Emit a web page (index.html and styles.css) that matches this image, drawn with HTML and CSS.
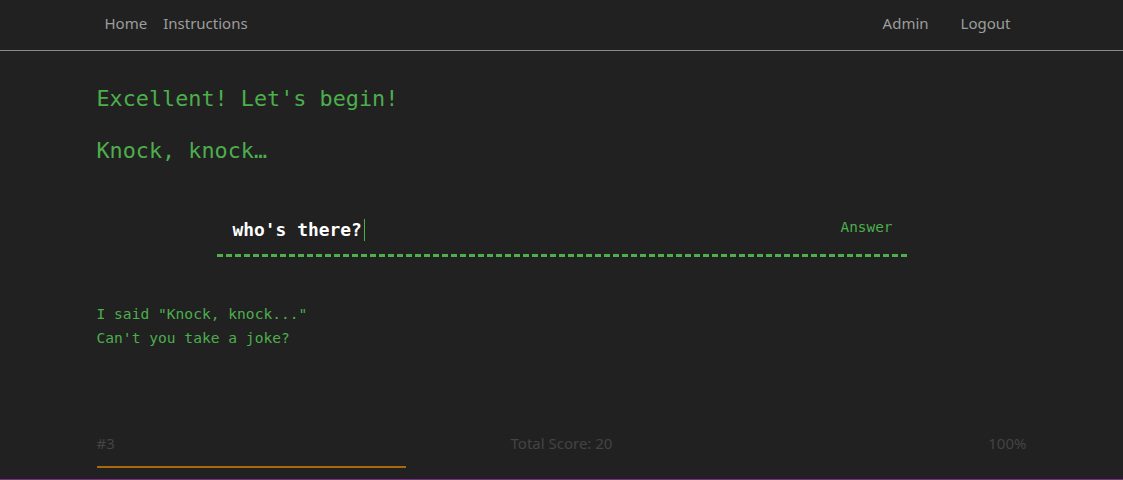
FILE: index.html
```html
<!DOCTYPE html>
<html>
<head>
<meta charset="utf-8">
<link rel="stylesheet" href="styles.css">
</head>
<body>
<nav class="navbar">
  <div class="container nav-inner">
    <ul class="nav nav-left">
      <li><a href="#">Home</a></li>
      <li><a href="#">Instructions</a></li>
    </ul>
    <ul class="nav nav-right">
      <li><a href="#">Admin</a></li>
      <li><a href="#">Logout</a></li>
    </ul>
  </div>
</nav>
<main class="container main">
  <h2 class="say">Excellent! Let's begin!</h2>
  <h2 class="say say-2">Knock, knock…</h2>
  <form class="answer-form">
    <div class="input-row">
      <span class="typed">who's there?</span><span class="cursor"></span>
      <button type="button" class="answer-btn">Answer</button>
    </div>
    <div class="dashes"></div>
  </form>
  <div class="reply">
    <p>I said "Knock, knock..."</p>
    <p>Can't you take a joke?</p>
  </div>
  <footer class="status">
    <div class="status-row">
      <span class="num">#3</span>
      <span class="score">Total Score: 20</span>
      <span class="pct">100%</span>
    </div>
    <div class="progress"><div class="progress-bar" style="width:33.3%"></div></div>
  </footer>
</main>
<div class="bottom-line"></div>
</body>
</html>
```
FILE: styles.css
```css
html, body {
  margin: 0;
  padding: 0;
  background: #212121;
  height: 480px;
  overflow: hidden;
}
body {
  display: flex;
  flex-direction: column;
  font-family: "Noto Sans", "Open Sans", sans-serif;
}
.container {
  width: 930px;
  margin: 0 auto;
}
.navbar {
  height: 50px;
  border-bottom: 1px solid #8a8a8a;
  box-sizing: content-box;
}
.nav-inner {
  display: flex;
  justify-content: space-between;
  height: 46px;
  align-items: center;
}
.nav {
  list-style: none;
  margin: 0;
  padding: 0;
  display: flex;
}
.nav a {
  color: #9d9d9d;
  text-decoration: none;
  font-size: 15px;
  display: block;
  line-height: 20px;
}
.nav-left a { padding: 0 8px; }
.nav-right a { padding: 0 16px; }
.main {
  flex: 1;
  display: flex;
  flex-direction: column;
  font-family: "DejaVu Sans Mono", "Liberation Mono", monospace;
  color: #4cae4c;
}
.say {
  margin: 0;
  font-size: 21.8px;
  font-weight: normal;
  line-height: 30px;
  margin-top: 33px;
}
.say-2 {
  margin-top: 22px;
}
.answer-form {
  width: 690px;
  margin: 44px auto 0;
}
.input-row {
  display: flex;
  align-items: center;
  height: 40px;
  padding: 0 14px 0 16px;
}
.typed {
  color: #ffffff;
  font-weight: bold;
  font-size: 17.9px;
  line-height: 24px;
}
.cursor {
  width: 1px;
  height: 22px;
  background: #4cae4c;
  margin-left: 2px;
}
.answer-btn {
  margin-left: auto;
  background: none;
  border: none;
  padding: 0;
  color: #4cae4c;
  font-family: "DejaVu Sans Mono", "Liberation Mono", monospace;
  font-size: 14.4px;
  line-height: 20px;
  margin-top: -6px;
}
.dashes {
  height: 3px;
  margin-top: 4px;
  background: repeating-linear-gradient(to right, #4cae4c 0 6px, transparent 6px 9px);
}
.reply {
  margin-top: 45px;
  font-size: 14.6px;
  line-height: 24px;
}
.reply p { margin: 0; }
.status {
  margin-top: auto;
  padding-bottom: 11px;
}
.status-row {
  display: grid;
  grid-template-columns: 1fr auto 1fr;
  font-family: "Noto Sans", "Open Sans", sans-serif;
  font-size: 15px;
  line-height: 20px;
  color: #444444;
}
.pct { text-align: right; }
.progress {
  margin-top: 13px;
  height: 2px;
}
.progress-bar {
  height: 2px;
  background: #a8680d;
}
.bottom-line {
  height: 1px;
  background: #7d2d8c;
}
```
